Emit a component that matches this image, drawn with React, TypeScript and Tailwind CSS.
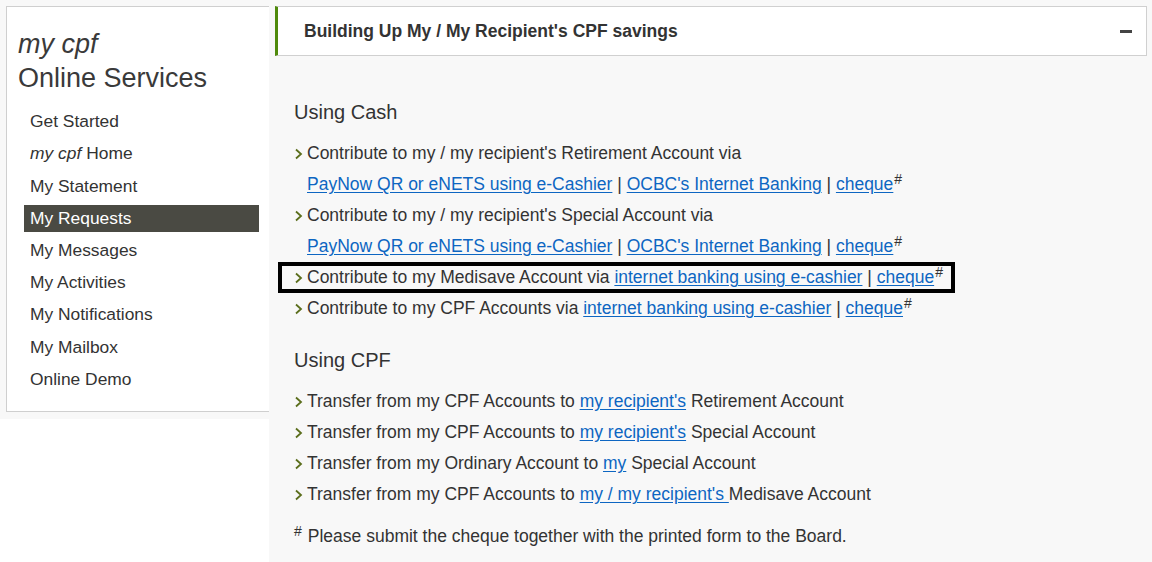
import React from "react";

const menu = [
  { label: "Get Started" },
  { label: "Home", italic: "my cpf" },
  { label: "My Statement" },
  { label: "My Requests", active: true },
  { label: "My Messages" },
  { label: "My Activities" },
  { label: "My Notifications" },
  { label: "My Mailbox" },
  { label: "Online Demo" },
];

function Chevron() {
  return (
    <svg width="9" height="12" viewBox="0 0 9 12" className="mr-[4px] shrink-0">
      <path d="M2 1.5 L7 6 L2 10.5" fill="none" stroke="#5b6e1c" strokeWidth="1.8" />
    </svg>
  );
}

function A({ children }: { children: React.ReactNode }) {
  return <a href="#" className="text-[#0d66c2] underline underline-offset-2">{children}</a>;
}

function Sup() {
  return <sup className="text-[14px] relative top-[-6px] ml-[1px]">#</sup>;
}

function Row({ children }: { children: React.ReactNode }) {
  return (
    <div className="flex items-center h-[31px] whitespace-nowrap">
      <Chevron />
      <span>{children}</span>
    </div>
  );
}

export default function App() {
  return (
    <div className="flex w-[1152px] h-[562px] bg-white text-[#333] font-['Liberation_Sans',Arial,sans-serif] overflow-hidden">
      {/* Sidebar */}
      <div className="w-[269px] shrink-0 self-start bg-[#f8f8f8] pt-[6px] pl-[6px] pb-[7px]">
        <div className="bg-white border border-[#cfcfcf] border-r-0 pt-[20px] pb-[16px]">
          <div className="pl-[11px] text-[27px] leading-[34px] text-[#3a3a3a]">
            <div className="italic">my cpf</div>
            <div>Online Services</div>
          </div>
          <ul className="mt-[10px] pl-[17px] pr-[10px] text-[17.4px]">
            {menu.map((m) => (
              <li
                key={m.label}
                className={`flex items-center pl-[6px] ${
                  m.active ? "bg-[#4a4a43] text-white h-[27px] mt-[3px] mb-[2px]" : "h-[32.25px] text-[#333]"
                }`}
              >
                {m.italic && <span className="italic mr-[5px]">{m.italic}</span>}
                {m.label}
              </li>
            ))}
          </ul>
        </div>
      </div>

      {/* Main */}
      <div className="flex-1 bg-[#f8f8f8] pt-[6px] text-[17.5px]">
        <div className="ml-[6px] mr-[5px] h-[50px] bg-white border border-[#d0d0d0] border-l-[3px] border-l-[#4f8a0b] flex items-center justify-between pl-[26px] pr-[14px]">
          <span className="font-bold text-[17.5px] text-[#333]">Building Up My / My Recipient's CPF savings</span>
          <span className="block w-[12px] h-[3px] bg-[#444]" />
        </div>

        <div className="pl-[25px]">
          <h2 className="text-[20px] mt-[43px] leading-[26px]">Using Cash</h2>
          <div className="mt-[13px]">
            <Row>Contribute to my / my recipient's Retirement Account via</Row>
            <div className="h-[31px] flex items-center pl-[13px] whitespace-nowrap">
              <A>PayNow QR or eNETS using e-Cashier</A>&nbsp;|&nbsp;<A>OCBC's Internet Banking</A>&nbsp;|&nbsp;<A>cheque</A>
              <Sup />
            </div>
            <Row>Contribute to my / my recipient's Special Account via</Row>
            <div className="h-[31px] flex items-center pl-[13px] whitespace-nowrap">
              <A>PayNow QR or eNETS using e-Cashier</A>&nbsp;|&nbsp;<A>OCBC's Internet Banking</A>&nbsp;|&nbsp;<A>cheque</A>
              <Sup />
            </div>
            <div className="ml-[-16px] w-[677px] h-[31px] border-[4px] border-black flex items-center pl-[12px] whitespace-nowrap">
              <Chevron />
              <span>
                Contribute to my Medisave Account via <A>internet banking using e-cashier</A> | <A>cheque</A>
                <Sup />
              </span>
            </div>
            <Row>
              Contribute to my CPF Accounts via <A>internet banking using e-cashier</A> | <A>cheque</A>
              <Sup />
            </Row>
          </div>

          <h2 className="text-[20px] mt-[23px] leading-[26px]">Using CPF</h2>
          <div className="mt-[13px]">
            <Row>
              Transfer from my CPF Accounts to <A>my recipient's</A> Retirement Account
            </Row>
            <Row>
              Transfer from my CPF Accounts to <A>my recipient's</A> Special Account
            </Row>
            <Row>
              Transfer from my Ordinary Account to <A>my</A> Special Account
            </Row>
            <Row>
              Transfer from my CPF Accounts to <A>my / my recipient's </A>Medisave Account
            </Row>
          </div>
          <div className="mt-[11px] h-[31px] flex items-center whitespace-nowrap">
            <sup className="text-[14px] mr-[6px] relative top-[-6px]">#</sup>
            Please submit the cheque together with the printed form to the Board.
          </div>
        </div>
      </div>
    </div>
  );
}
